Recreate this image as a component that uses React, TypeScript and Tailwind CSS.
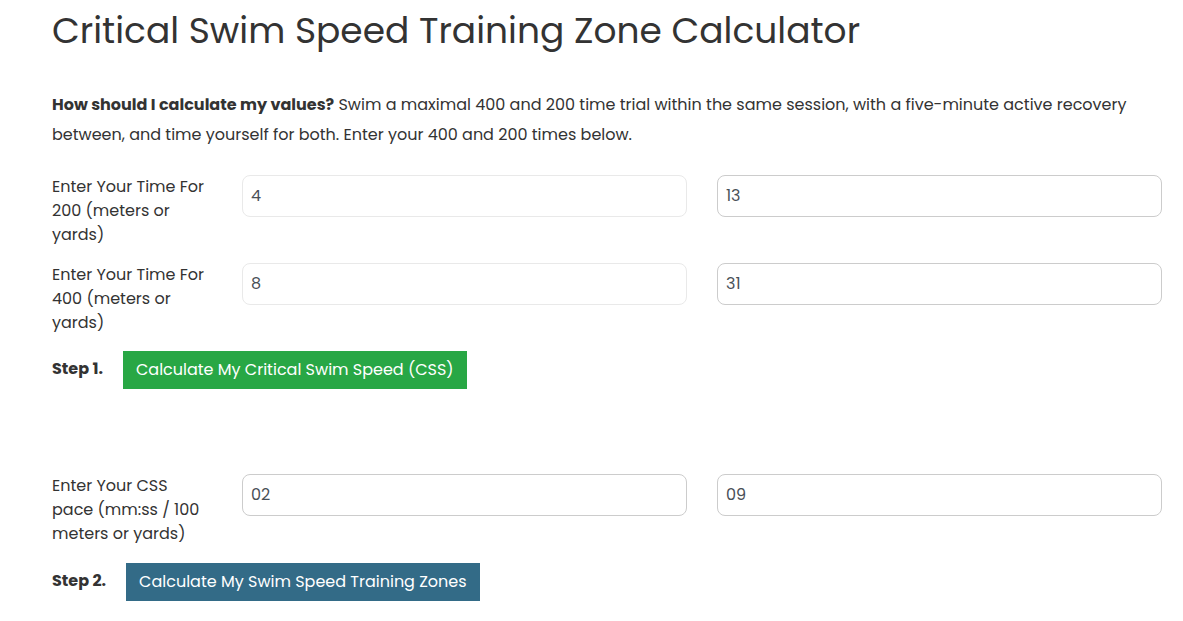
import { useState } from "react";

type RowProps = {
  id: string;
  label: string;
  minutes: string;
  seconds: string;
  lightMinutes?: boolean;
};

const field =
  "h-[42px] w-full min-w-0 rounded-lg border bg-white px-2 pb-0.5 text-base text-[#495057]";

function TimeRow({ id, label, minutes, seconds, lightMinutes }: RowProps) {
  const [min, setMin] = useState(minutes);
  const [sec, setSec] = useState(seconds);
  return (
    <div className="grid grid-cols-[160px_1fr_1fr] items-start gap-x-[30px]">
      <label htmlFor={id} className="text-base leading-6">
        {label}
      </label>
      <input
        id={id}
        value={min}
        onChange={(e) => setMin(e.target.value)}
        className={`${field} ${lightMinutes ? "border-[#e9e9e9]" : "border-[#cccccc]"}`}
      />
      <input
        aria-label={`${label} seconds`}
        value={sec}
        onChange={(e) => setSec(e.target.value)}
        className={`${field} border-[#cccccc]`}
      />
    </div>
  );
}

export default function App() {
  return (
    <main className="bg-white pt-2 pr-[21px] pb-5 pl-[52px] font-['Poppins','Inter',sans-serif] text-[#333333]">
      <h1 className="text-4xl leading-[46px]">Critical Swim Speed Training Zone Calculator</h1>
      <p className="mt-9 text-base leading-[30px]">
        <strong>How should I calculate my values?</strong> Swim a maximal 400 and 200 time trial
        within the same session, with a five-minute active recovery between, and time yourself for
        both. Enter your 400 and 200 times below.
      </p>
      <form onSubmit={(e) => e.preventDefault()}>
        <div className="mt-[25px] flex flex-col gap-4">
          <TimeRow id="t200" label="Enter Your Time For 200 (meters or yards)" minutes="4" seconds="13" lightMinutes />
          <TimeRow id="t400" label="Enter Your Time For 400 (meters or yards)" minutes="8" seconds="31" lightMinutes />
        </div>
        <div className="mt-4 flex items-center gap-5">
          <strong className="pb-0.5">Step 1.</strong>
          <button type="submit" className="h-[38px] bg-[#28a745] px-[13px] text-white">
            Calculate My Critical Swim Speed (CSS)
          </button>
        </div>
      </form>
      <form className="mt-[85px]" onSubmit={(e) => e.preventDefault()}>
        <TimeRow id="css" label="Enter Your CSS pace (mm:ss / 100 meters or yards)" minutes="02" seconds="09" />
        <div className="mt-[17px] flex items-center gap-5">
          <strong className="pb-0.5">Step 2.</strong>
          <button type="submit" className="h-[38px] bg-[#336b87] px-[13px] text-white">
            Calculate My Swim Speed Training Zones
          </button>
        </div>
      </form>
    </main>
  );
}
